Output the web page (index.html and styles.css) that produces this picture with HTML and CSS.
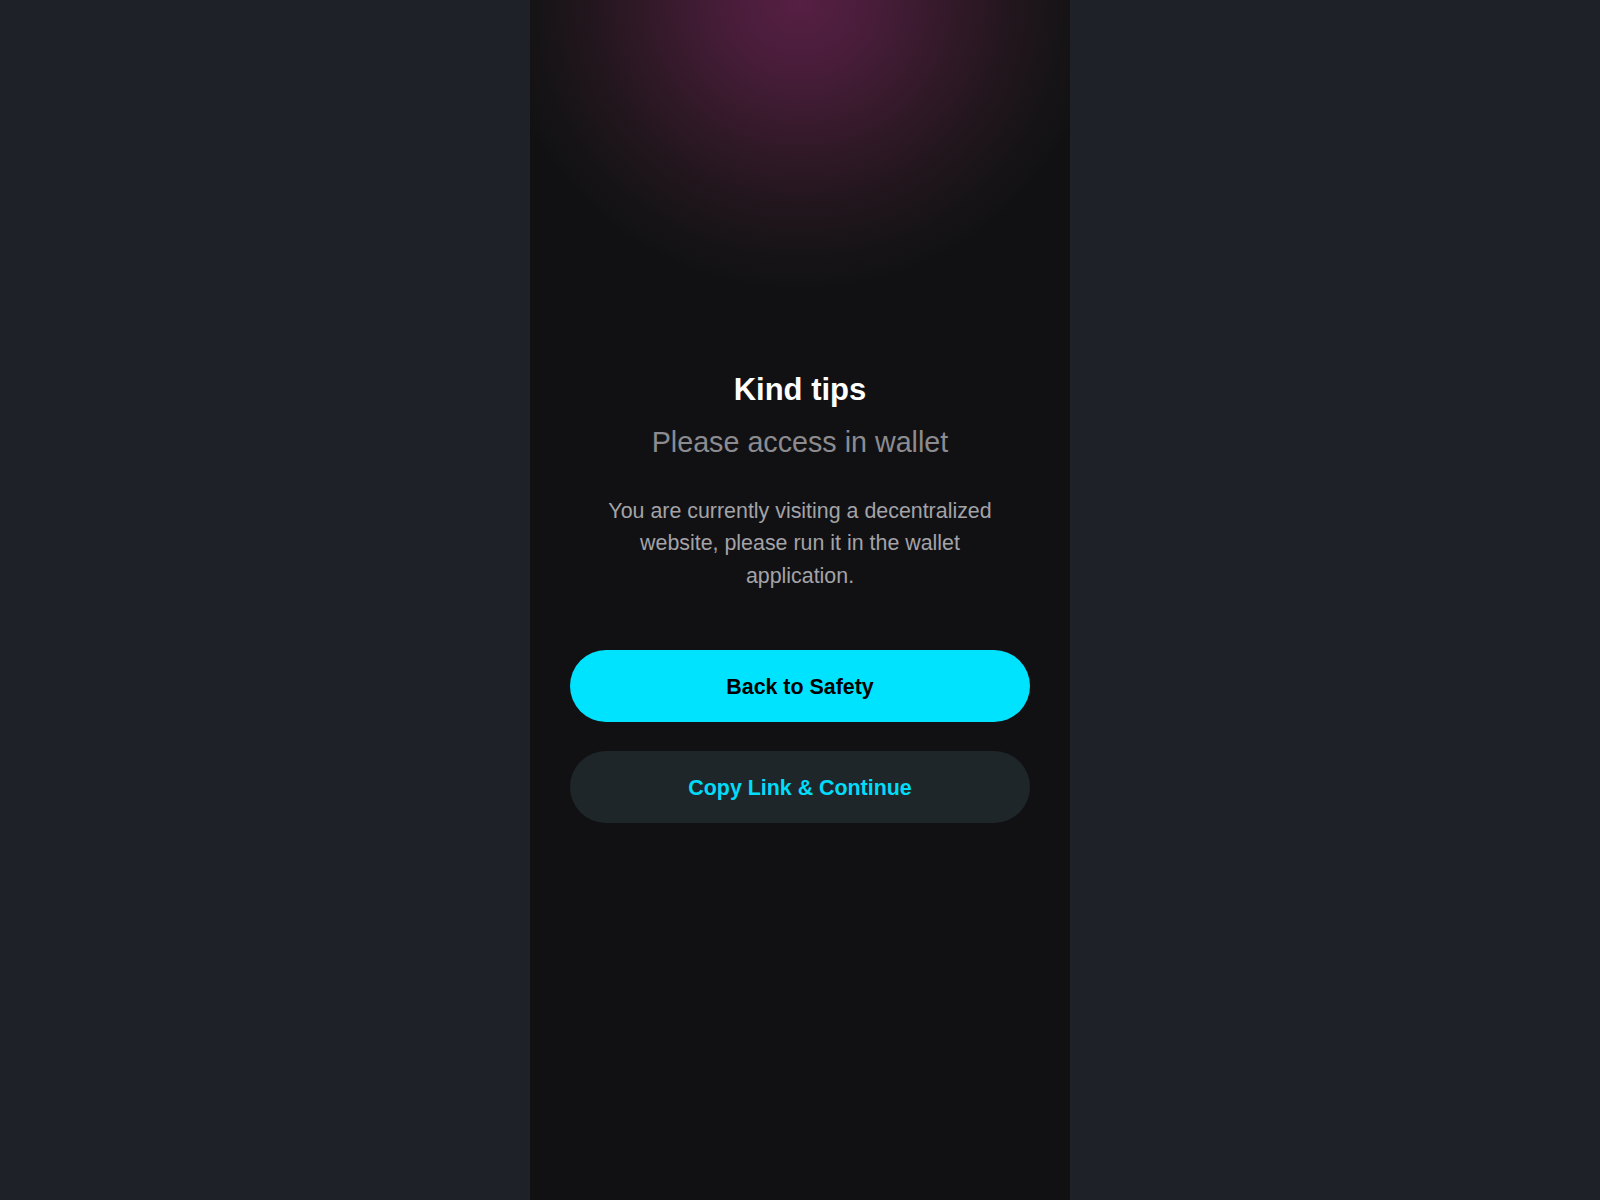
FILE: index.html
```html
<!DOCTYPE html>
<html lang="en">
<head>
<meta charset="utf-8">
<title>Kind tips</title>
<link rel="stylesheet" href="styles.css">
</head>
<body>
<div class="page">
  <main class="content">
    <h1 class="title">Kind tips</h1>
    <p class="subtitle">Please access in wallet</p>
    <p class="desc">You are currently visiting a decentralized website, please run it in the wallet application.</p>
    <div class="actions">
      <button class="btn btn-primary">Back to Safety</button>
      <button class="btn btn-secondary">Copy Link &amp; Continue</button>
    </div>
  </main>
</div>
</body>
</html>
```

FILE: styles.css
```css
html, body {
  margin: 0;
  padding: 0;
}
body {
  background: #1f2129;
  font-family: "Liberation Sans", Arial, sans-serif;
  min-height: 100vh;
}
.page {
  width: 540px;
  margin: 0 auto;
  min-height: 100vh;
  background-color: #111113;
  background-image: radial-gradient(ellipse 300px 290px at 50% 0, #561f43 0%, #4a1d3b 22%, #371a2c 45%, #24161e 68%, #181418 85%, rgba(17,17,19,0) 100%);
  background-repeat: no-repeat;
}
.content {
  padding: 372px 40px 0;
  display: flex;
  flex-direction: column;
  align-items: center;
  text-align: center;
}
.title {
  margin: 0;
  font-size: 31px;
  line-height: 36px;
  font-weight: 700;
  color: #ffffff;
}
.subtitle {
  margin: 17px 0 0;
  font-size: 28.7px;
  line-height: 34px;
  font-weight: 400;
  color: #8b8b90;
}
.desc {
  margin: 36px 0 0;
  width: 400px;
  font-size: 21.4px;
  line-height: 32.3px;
  color: #a3a3a8;
}
.actions {
  margin-top: 58px;
  width: 100%;
  display: flex;
  flex-direction: column;
  gap: 29px;
}
.btn {
  width: 100%;
  height: 72px;
  padding: 3px 0 0;
  border: none;
  border-radius: 36px;
  font-family: "Liberation Sans", Arial, sans-serif;
  font-size: 21.4px;
  font-weight: 700;
  cursor: pointer;
}
.btn-primary {
  background: #00e3ff;
  color: #000000;
}
.btn-secondary {
  background: #1e2629;
  color: #00dcfa;
}
```
